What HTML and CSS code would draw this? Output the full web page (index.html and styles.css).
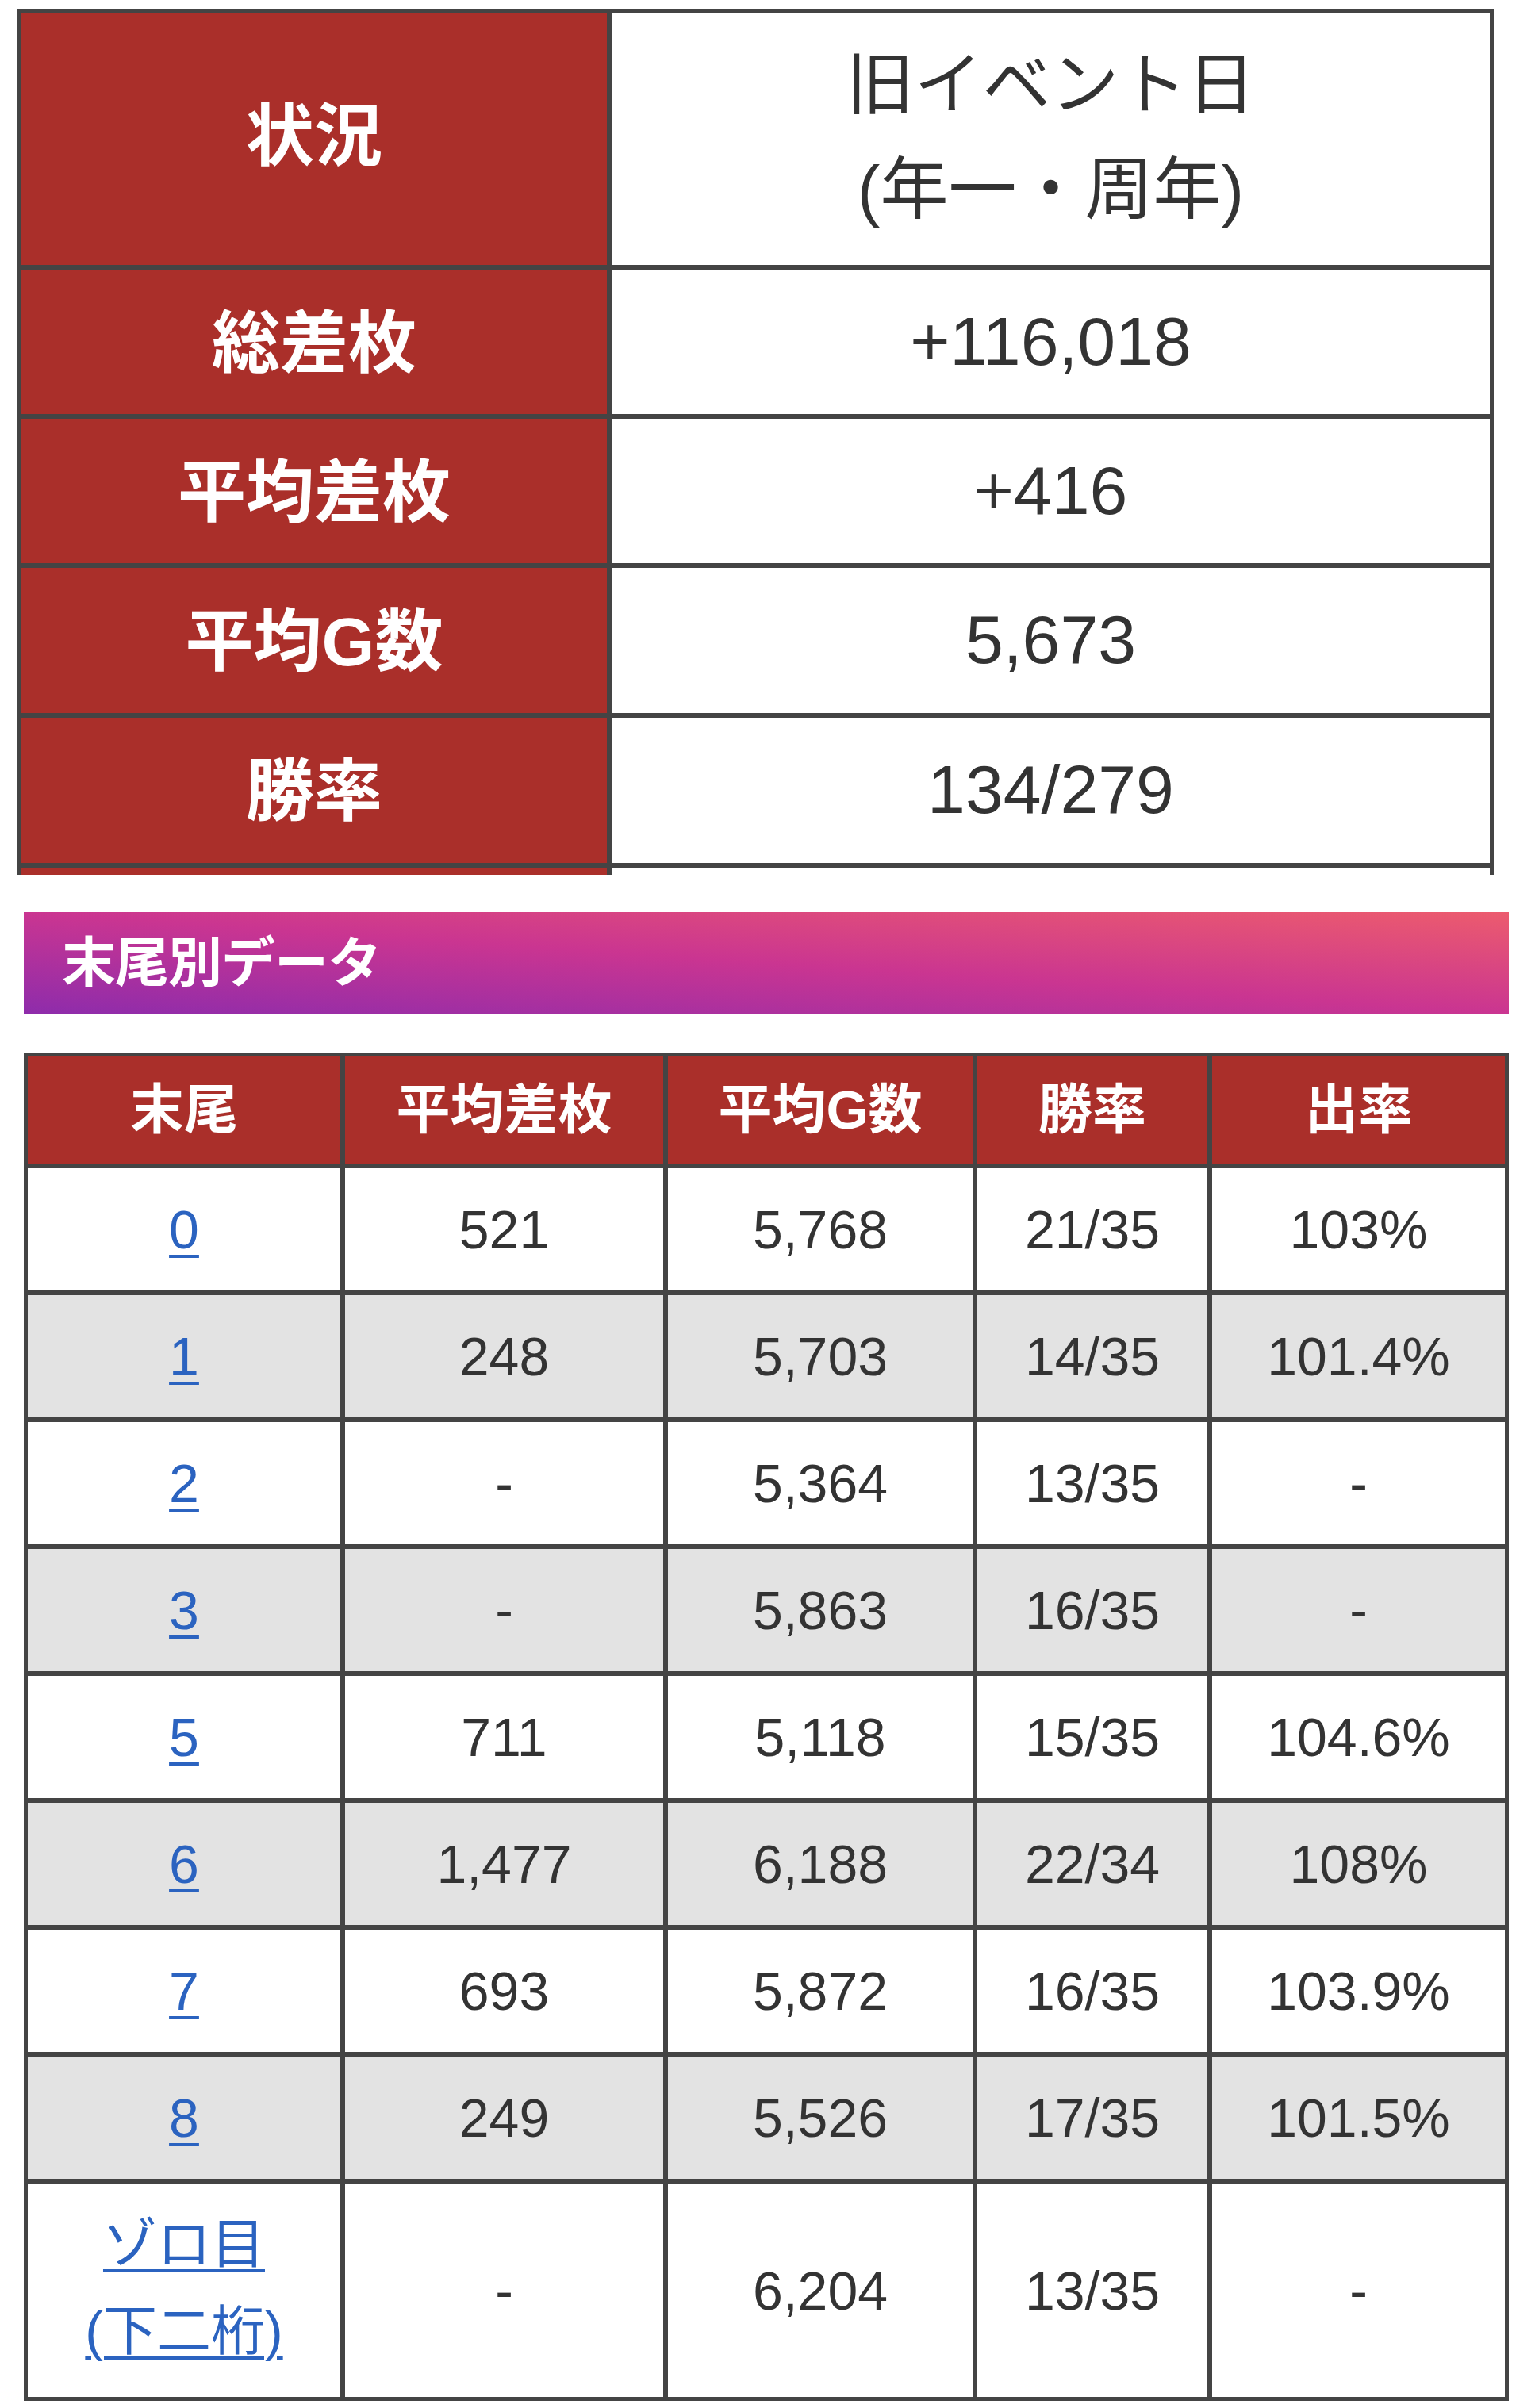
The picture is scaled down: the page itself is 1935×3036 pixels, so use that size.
FILE: index.html
```html
<!DOCTYPE html>
<html lang="ja">
<head>
<meta charset="utf-8">
<title>旧イベント日 データ</title>
<link rel="stylesheet" href="styles.css">
</head>
<body>
<div class="page">
  <div class="summary">
    <div class="th th-first">状況</div>
    <div class="td td-multi">旧イベント日<br>(年一・周年)</div>
    <div class="th">総差枚</div>
    <div class="td">+116,018</div>
    <div class="th">平均差枚</div>
    <div class="td">+416</div>
    <div class="th">平均G数</div>
    <div class="td">5,673</div>
    <div class="th">勝率</div>
    <div class="td">134/279</div>
    <div class="th stub"></div>
    <div class="td stub"></div>
  </div>

  <h2 class="banner">末尾別データ</h2>

  <div class="tail">
    <div class="h">末尾</div><div class="h">平均差枚</div><div class="h">平均G数</div><div class="h">勝率</div><div class="h">出率</div>

    <div class="c"><a href="#">0</a></div><div class="c">521</div><div class="c">5,768</div><div class="c">21/35</div><div class="c">103%</div>
    <div class="c g"><a href="#">1</a></div><div class="c g">248</div><div class="c g">5,703</div><div class="c g">14/35</div><div class="c g">101.4%</div>
    <div class="c"><a href="#">2</a></div><div class="c">-</div><div class="c">5,364</div><div class="c">13/35</div><div class="c">-</div>
    <div class="c g"><a href="#">3</a></div><div class="c g">-</div><div class="c g">5,863</div><div class="c g">16/35</div><div class="c g">-</div>
    <div class="c"><a href="#">5</a></div><div class="c">711</div><div class="c">5,118</div><div class="c">15/35</div><div class="c">104.6%</div>
    <div class="c g"><a href="#">6</a></div><div class="c g">1,477</div><div class="c g">6,188</div><div class="c g">22/34</div><div class="c g">108%</div>
    <div class="c"><a href="#">7</a></div><div class="c">693</div><div class="c">5,872</div><div class="c">16/35</div><div class="c">103.9%</div>
    <div class="c g"><a href="#">8</a></div><div class="c g">249</div><div class="c g">5,526</div><div class="c g">17/35</div><div class="c g">101.5%</div>
    <div class="c c-multi"><a href="#">ゾロ目<br>(下二桁)</a></div><div class="c">-</div><div class="c">6,204</div><div class="c">13/35</div><div class="c">-</div>
  </div>
</div>
</body>
</html>
```

FILE: styles.css
```css
html, body {
  margin: 0;
  padding: 0;
  background: #ffffff;
}

body {
  font-family: "Liberation Sans", "Noto Sans CJK JP", sans-serif;
  color: #333333;
}

.page {
  padding-top: 11px;
  padding-bottom: 9px;
}

/* ---------- summary table ---------- */
.summary {
  display: grid;
  width: 1861px;
  box-sizing: border-box;
  margin-left: 22px;
  padding: 5px 5px 0 5px;
  background: #444444;
  grid-template-columns: 738px 1107px;
  grid-template-rows: 318px 182px 182px 183px 183px 9px;
  gap: 6px;
}

.summary .th {
  background: #aa2f2a;
  color: #ffffff;
  font-weight: 700;
  font-size: 86px;
  display: flex;
  align-items: center;
  justify-content: center;
  padding-bottom: 12px;
}

.summary .th-first {
  padding-bottom: 22px;
}

.summary .stub {
  padding: 0;
}

.summary .td {
  background: #ffffff;
  color: #333333;
  font-size: 86px;
  display: flex;
  align-items: center;
  justify-content: center;
  text-align: center;
  padding-bottom: 2px;
}

.summary .td-multi {
  line-height: 132px;
  padding-bottom: 4px;
}

/* ---------- banner ---------- */
.banner {
  margin: 47px 0 0 30px;
  width: 1872px;
  height: 128px;
  box-sizing: border-box;
  padding: 0 0 12px 48px;
  display: flex;
  align-items: center;
  background: linear-gradient(to top right, #8e2cab 0%, #ca3591 50%, #ec5b6e 100%);
  color: #ffffff;
  font-size: 68px;
  font-weight: 700;
  letter-spacing: -1px;
}

/* ---------- tail table ---------- */
.tail {
  display: grid;
  width: 1872px;
  box-sizing: border-box;
  margin: 49px 0 0 30px;
  padding: 5px;
  background: #444444;
  grid-template-columns: 394px 401px 384px 290px 369px;
  grid-template-rows: 135px repeat(8, 154px) 269px;
  gap: 6px;
}

.tail .h {
  background: #aa2f2a;
  color: #ffffff;
  font-weight: 700;
  font-size: 68px;
  display: flex;
  align-items: center;
  justify-content: center;
  padding-bottom: 12px;
}

.tail .c {
  background: #ffffff;
  color: #333333;
  font-size: 68px;
  display: flex;
  align-items: center;
  justify-content: center;
  text-align: center;
}

.tail .c.g {
  background: #e3e3e3;
}

.tail .c-multi {
  line-height: 110px;
  padding-bottom: 8px;
}

.tail a {
  color: #2b63c0;
  text-decoration: underline;
  text-decoration-thickness: 4px;
  text-underline-offset: 8px;
}
```
